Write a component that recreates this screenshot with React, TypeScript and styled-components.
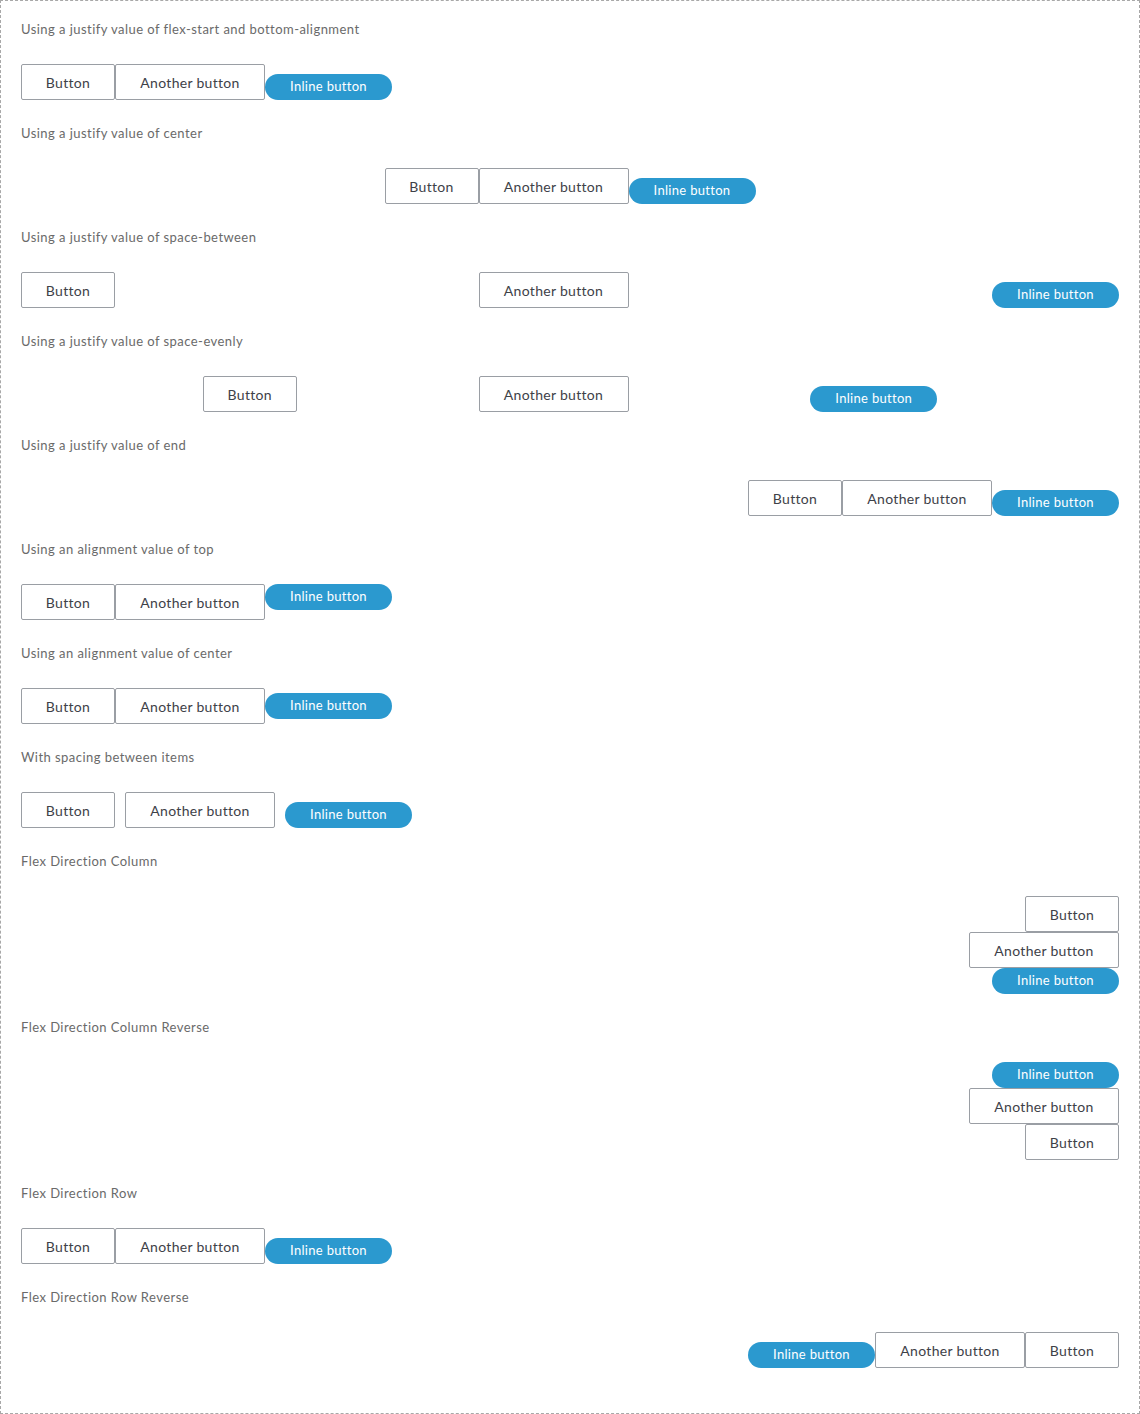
import React from "react";
import styled, { createGlobalStyle } from "styled-components";

const Global = createGlobalStyle`
  html, body { margin: 0; padding: 0; background: #fff; }
  body { font-family: Lato, "Open Sans", "Liberation Sans", sans-serif; }
  * { box-sizing: border-box; }
`;

const Frame = styled.div`
  width: 1140px;
  height: 1414px;
  border: 1px dashed #a8a8a8;
  padding: 19px 20px 20px;
  display: flex;
  flex-direction: column;
`;

const Section = styled.section`
  display: flex;
  flex-direction: column;
  margin-bottom: 24px;
`;

const Label = styled.div`
  font-size: 13px;
  line-height: 18px;
  letter-spacing: 0.45px;
  color: #6a6a6a;
  margin-bottom: 26px;
`;

type RowProps = {
  $justify?: string;
  $align?: string;
  $direction?: string;
  $gap?: number;
};

const Row = styled.div<RowProps>`
  display: flex;
  flex-direction: ${(p) => p.$direction || "row"};
  justify-content: ${(p) => p.$justify || "flex-start"};
  align-items: ${(p) => p.$align || "flex-end"};
  gap: ${(p) => p.$gap || 0}px;
`;

const Button = styled.button<{ $w: number }>`
  width: ${(p) => p.$w}px;
  height: 36px;
  padding: 0;
  border: 1px solid #9a9ea4;
  border-radius: 2px;
  background: #fff;
  color: #3e4148;
  font-family: inherit;
  font-size: 14px;
  letter-spacing: 0.3px;
  flex: none;
`;

const Inline = styled.button`
  width: 127px;
  height: 26px;
  padding: 0 0 2px;
  border: none;
  border-radius: 13px;
  background: #2b99cf;
  color: #fff;
  font-family: inherit;
  font-size: 13px;
  letter-spacing: 0.3px;
  flex: none;
`;

const Items = () => (
  <>
    <Button $w={94}>Button</Button>
    <Button $w={150}>Another button</Button>
    <Inline>Inline button</Inline>
  </>
);

const sections: { label: string; row: RowProps }[] = [
  { label: "Using a justify value of flex-start and bottom-alignment", row: {} },
  { label: "Using a justify value of center", row: { $justify: "center" } },
  { label: "Using a justify value of space-between", row: { $justify: "space-between" } },
  { label: "Using a justify value of space-evenly", row: { $justify: "space-evenly" } },
  { label: "Using a justify value of end", row: { $justify: "flex-end" } },
  { label: "Using an alignment value of top", row: { $align: "flex-start" } },
  { label: "Using an alignment value of center", row: { $align: "center" } },
  { label: "With spacing between items", row: { $gap: 10 } },
  { label: "Flex Direction Column", row: { $direction: "column", $align: "flex-end" } },
  { label: "Flex Direction Column Reverse", row: { $direction: "column-reverse", $align: "flex-end" } },
  { label: "Flex Direction Row", row: { $direction: "row" } },
  { label: "Flex Direction Row Reverse", row: { $direction: "row-reverse" } },
];

export default function App() {
  return (
    <>
      <Global />
      <Frame>
        {sections.map((s) => (
          <Section key={s.label}>
            <Label>{s.label}</Label>
            <Row {...s.row}>
              <Items />
            </Row>
          </Section>
        ))}
      </Frame>
    </>
  );
}
